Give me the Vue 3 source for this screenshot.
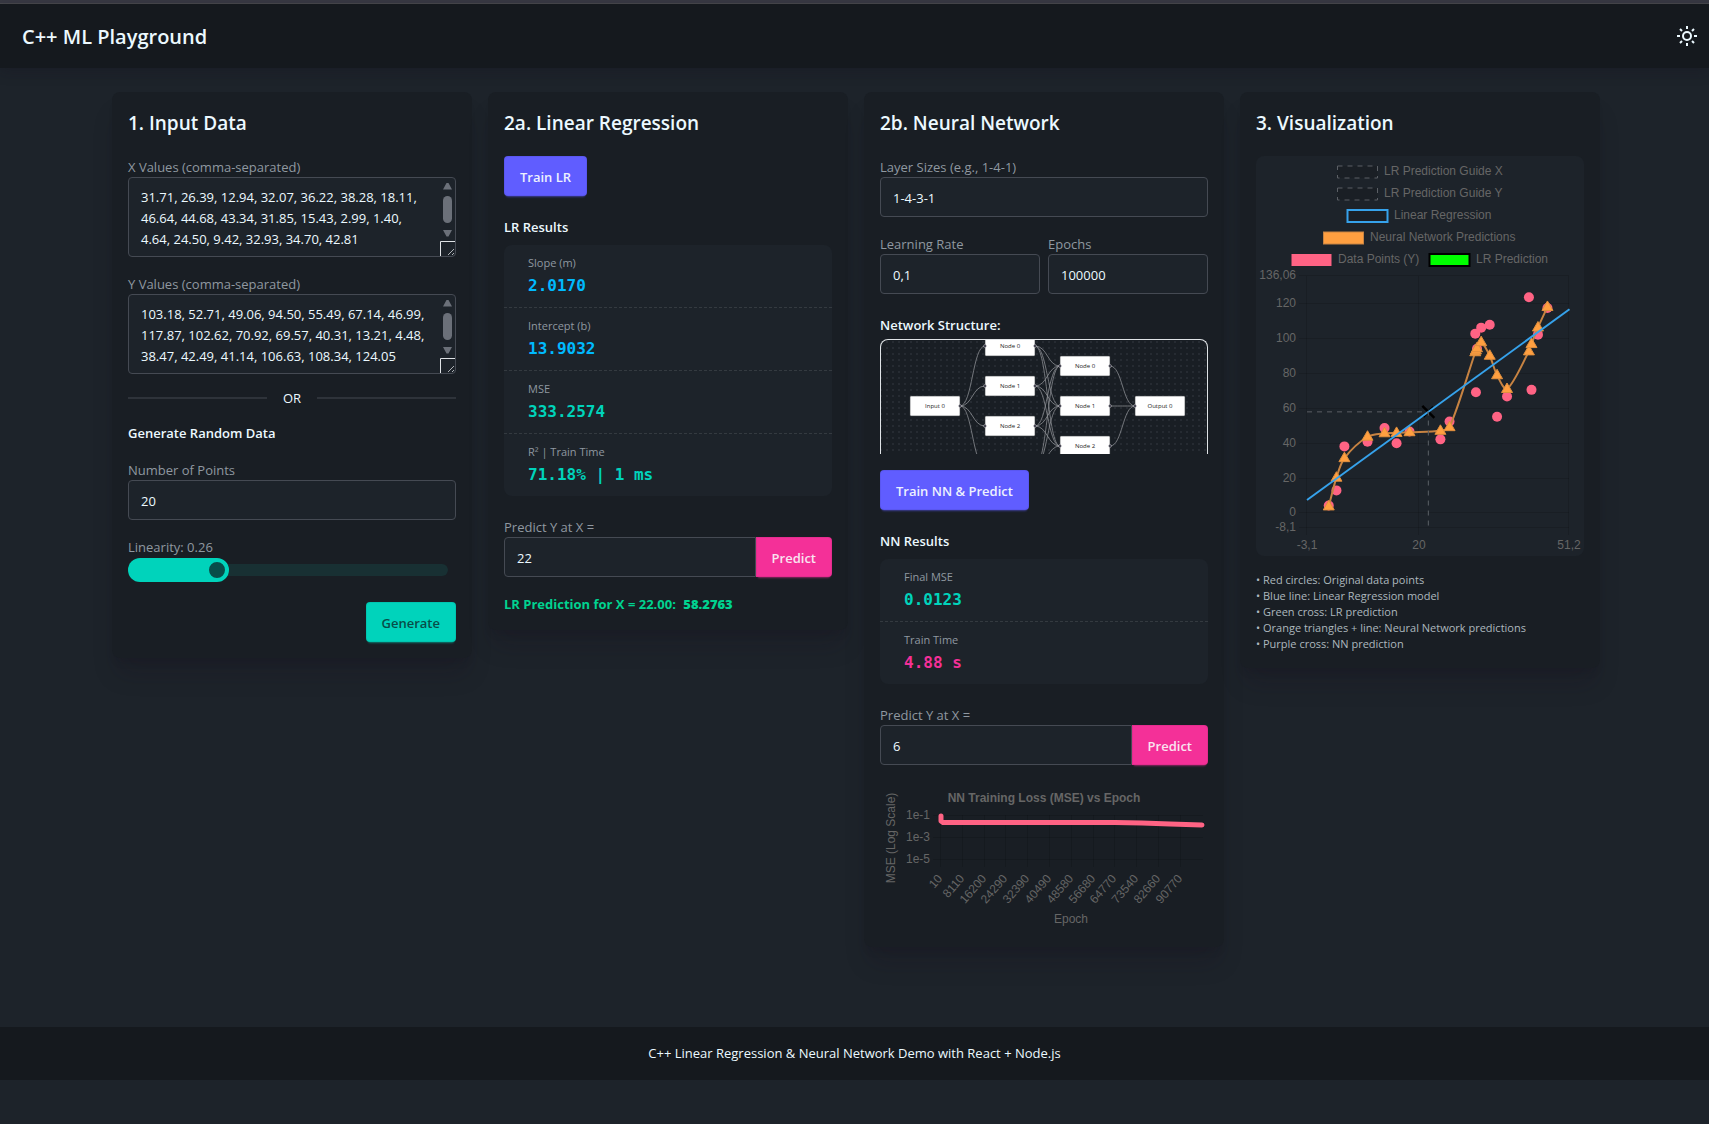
<script setup>
import { ref, computed } from 'vue'

const xValues = ref('31.71, 26.39, 12.94, 32.07, 36.22, 38.28, 18.11, 46.64, 44.68, 43.34, 31.85, 15.43, 2.99, 1.40, 4.64, 24.50, 9.42, 32.93, 34.70, 42.81')
const yValues = ref('103.18, 52.71, 49.06, 94.50, 55.49, 67.14, 46.99, 117.87, 102.62, 70.92, 69.57, 40.31, 13.21, 4.48, 38.47, 42.49, 41.14, 106.63, 108.34, 124.05')
const pointCount = ref(20)
const linearity = ref(0.26)
const lrX = ref(22)
const nnX = ref(6)
const layers = ref('1-4-3-1')
const rate = ref('0,1')
const epochs = ref(100000)

const lrStats = [
  { label: 'Slope (m)', value: '2.0170', tone: 'info' },
  { label: 'Intercept (b)', value: '13.9032', tone: 'info' },
  { label: 'MSE', value: '333.2574', tone: 'accent' },
  { label: 'R² | Train Time', value: '71.18% | 1 ms', tone: 'accent' }
]
const nnStats = [
  { label: 'Final MSE', value: '0.0123', tone: 'accent' },
  { label: 'Train Time', value: '4.88 s', tone: 'secondary' }
]

/* Regression plot */
const sx = (x) => 51 + (x + 3.1) * 4.834
const sy = (y) => 371.5 - (y + 8.1) * 1.742
const points = computed(() => {
  const ys = yValues.value.split(',').map(Number)
  return xValues.value.split(',').map((x, i) => ({ x: sx(Number(x)), y: sy(ys[i]) }))
})
const nn = [
  [1.4, 4], [2.99, 20.5], [4.64, 31.7], [9.42, 44], [12.94, 46], [15.43, 46.2], [18.11, 46.6],
  [24.5, 47.4], [26.39, 49.5], [31.71, 92.5], [31.85, 93.5], [32.07, 94.8], [32.93, 98.3], [34.7, 90.5],
  [36.22, 79.3], [38.28, 71.4], [42.81, 93], [43.34, 97.2], [44.68, 106.7], [46.64, 118.5]
].map(([x, y]) => ({ x: sx(x), y: sy(y) }))
const controls = (p, c, n, t) => {
  const d1 = Math.hypot(c.x - p.x, c.y - p.y)
  const d2 = Math.hypot(n.x - c.x, n.y - c.y)
  const sum = d1 + d2 || 1
  const a = (t * d1) / sum
  const b = (t * d2) / sum
  return {
    px: c.x - a * (n.x - p.x), py: c.y - a * (n.y - p.y),
    nx: c.x + b * (n.x - p.x), ny: c.y + b * (n.y - p.y)
  }
}
const ctl = nn.map((c, i) => controls(nn[Math.max(i - 1, 0)], c, nn[Math.min(i + 1, nn.length - 1)], 0.3))
const nnPath = nn.map((c, i) => i === 0
  ? `M${c.x},${c.y}`
  : `C${ctl[i - 1].nx},${ctl[i - 1].ny} ${ctl[i].px},${ctl[i].py} ${c.x},${c.y}`).join(' ')
const yTicks = [
  { v: 136.06, t: '136,06' }, { v: 120, t: '120' }, { v: 100, t: '100' }, { v: 80, t: '80' },
  { v: 60, t: '60' }, { v: 40, t: '40' }, { v: 20, t: '20' }, { v: 0, t: '0' }, { v: -8.1, t: '-8,1' }
]
const xTicks = [{ v: -3.1, t: '-3,1' }, { v: 20, t: '20' }, { v: 51.2, t: '51,2' }]
const legend = [
  { t: 'LR Prediction Guide X', x: 81, row: 0, kind: 'guide' },
  { t: 'LR Prediction Guide Y', x: 81, row: 1, kind: 'guide' },
  { t: 'Linear Regression', x: 91, row: 2, kind: 'blue' },
  { t: 'Neural Network Predictions', x: 67, row: 3, kind: 'orange' },
  { t: 'Data Points (Y)', x: 35, row: 4, kind: 'pink' },
  { t: 'LR Prediction', x: 173, row: 4, kind: 'green' }
]

/* Network diagram */
const nodes = [
  { t: 'Input 0', x: 30, y: 67 },
  { t: 'Node 0', x: 105, y: 7 }, { t: 'Node 1', x: 105, y: 47 }, { t: 'Node 2', x: 105, y: 87 }, { t: 'Node 3', x: 105, y: 127 },
  { t: 'Node 0', x: 180, y: 27 }, { t: 'Node 1', x: 180, y: 67 }, { t: 'Node 2', x: 180, y: 107 },
  { t: 'Output 0', x: 255, y: 67 }
]
const columns = [nodes.slice(0, 1), nodes.slice(1, 5), nodes.slice(5, 8), nodes.slice(8)]
const visibleNodes = nodes.filter((n) => n.y < 115)
const edges = []
for (let i = 0; i < 3; i++) {
  for (const a of columns[i]) {
    for (const b of columns[i + 1]) {
      const x1 = a.x + 50
      const mid = (x1 + b.x) / 2
      edges.push(`M${x1},${a.y} C${mid},${a.y} ${mid},${b.y} ${b.x},${b.y}`)
    }
  }
}

/* Loss plot */
const lossTicks = ['10', '8110', '16200', '24290', '32390', '40490', '48580', '56680', '64770', '73540', '82660', '90770']
  .map((t, i) => ({ t, x: Math.round(61 + i * 21.8) }))
const lossRows = [{ t: '1e-1', y: 34 }, { t: '1e-3', y: 56 }, { t: '1e-5', y: 78 }]
</script>

<template>
  <div class="page">
    <div class="strip"></div>
    <header class="navbar">
      <h1>C++ ML Playground</h1>
      <button class="theme" type="button" aria-label="Toggle theme">
        <svg viewBox="0 0 20 20" width="20" height="20" fill="none" stroke="currentColor" stroke-width="2">
          <circle cx="10" cy="10" r="4" />
          <path d="M10 0v3M10 17v3M0 10h3M17 10h3M3 3l2 2M15 15l2 2M3 17l2-2M15 5l2-2" />
        </svg>
      </button>
    </header>

    <main class="grid">
      <section class="card">
        <h2>1. Input Data</h2>
        <div class="field">
          <label for="xs">X Values (comma-separated)</label>
          <div class="area">
            <textarea id="xs" v-model="xValues" spellcheck="false"></textarea>
            <svg class="bar" viewBox="0 0 15 78" width="15" height="78" aria-hidden="true">
              <path d="M3 11.500L6.500 5h2L12 11.500z M3 52h9l-3.500 6.500h-2z" fill="#6b7079" />
              <rect x="3" y="18" width="9" height="27" rx="4.500" fill="#6b7079" />
              <path d="M.5 78V63.500H15" fill="none" stroke="#dfe3e6" />
              <path d="M8 77l6-6M12 77l2-2" stroke="#aeb2b6" />
            </svg>
          </div>
        </div>
        <div class="field">
          <label for="ys">Y Values (comma-separated)</label>
          <div class="area">
            <textarea id="ys" v-model="yValues" spellcheck="false"></textarea>
            <svg class="bar" viewBox="0 0 15 78" width="15" height="78" aria-hidden="true">
              <path d="M3 11.500L6.500 5h2L12 11.500z M3 52h9l-3.500 6.500h-2z" fill="#6b7079" />
              <rect x="3" y="18" width="9" height="27" rx="4.500" fill="#6b7079" />
              <path d="M.5 78V63.500H15" fill="none" stroke="#dfe3e6" />
              <path d="M8 77l6-6M12 77l2-2" stroke="#aeb2b6" />
            </svg>
          </div>
        </div>
        <div class="divider">OR</div>
        <h3 class="flush">Generate Random Data</h3>
        <div class="field">
          <label for="count">Number of Points</label>
          <input id="count" v-model="pointCount" class="input" type="number">
        </div>
        <div class="field">
          <label for="lin">Linearity: {{ linearity }}</label>
          <input id="lin" v-model="linearity" class="range" type="range" min="0" max="1" step="0.01">
        </div>
        <button class="btn accent-btn end" type="button">Generate</button>
      </section>

      <section class="card">
        <h2>2a. Linear Regression</h2>
        <button class="btn primary-btn" type="button">Train LR</button>
        <h3>LR Results</h3>
        <dl class="stats">
          <div v-for="s in lrStats" :key="s.label" class="stat">
            <dt>{{ s.label }}</dt>
            <dd :class="s.tone">{{ s.value }}</dd>
          </div>
        </dl>
        <div class="field wide">
          <label for="lrx">Predict Y at X =</label>
          <div class="join">
            <input id="lrx" v-model="lrX" class="input" type="number">
            <button class="btn secondary-btn" type="button">Predict</button>
          </div>
        </div>
        <p class="result">LR Prediction for X = 22.00: <strong>58.2763</strong></p>
      </section>

      <section class="card">
        <h2>2b. Neural Network</h2>
        <div class="field">
          <label for="layers">Layer Sizes (e.g., 1-4-1)</label>
          <input id="layers" v-model="layers" class="input" type="text">
        </div>
        <div class="pair">
          <div class="field">
            <label for="rate">Learning Rate</label>
            <input id="rate" v-model="rate" class="input" type="text">
          </div>
          <div class="field">
            <label for="epochs">Epochs</label>
            <input id="epochs" v-model="epochs" class="input" type="number">
          </div>
        </div>
        <h3 class="tight">Network Structure:</h3>
        <div class="network">
          <svg viewBox="1 1 326 114" role="img" aria-label="Network structure">
            <defs>
              <pattern id="dots" x="4" y="0" width="6" height="6" patternUnits="userSpaceOnUse">
                <circle cx="3" cy="3" r="0.7" fill="#3d4249" />
              </pattern>
            </defs>
            <rect width="328" height="112" fill="url(#dots)" />
            <path v-for="(d, i) in edges" :key="i" :d="d" fill="none" stroke="#8c8e93" stroke-width="0.8" />
            <g v-for="(n, i) in visibleNodes" :key="'n' + i">
              <rect :x="n.x" :y="n.y - 10" width="50" height="20" rx="1" fill="#fff" stroke="#3a3d42" stroke-width="0.6" />
              <circle v-if="n.x > 30" :cx="n.x" :cy="n.y" r="1.400" fill="#1a192b" stroke="#ddd" stroke-width="0.5" />
              <circle v-if="n.x < 255" :cx="n.x + 50" :cy="n.y" r="1.400" fill="#1a192b" stroke="#ddd" stroke-width="0.5" />
              <text :x="n.x + 25" :y="n.y + 2" class="node">{{ n.t }}</text>
            </g>
          </svg>
        </div>
        <button class="btn primary-btn" type="button">Train NN &amp; Predict</button>
        <h3>NN Results</h3>
        <dl class="stats">
          <div v-for="s in nnStats" :key="s.label" class="stat">
            <dt>{{ s.label }}</dt>
            <dd :class="s.tone">{{ s.value }}</dd>
          </div>
        </dl>
        <div class="field wide">
          <label for="nnx">Predict Y at X =</label>
          <div class="join">
            <input id="nnx" v-model="nnX" class="input" type="number">
            <button class="btn secondary-btn" type="button">Predict</button>
          </div>
        </div>
        <svg class="chart" viewBox="0 0 328 150" role="img" aria-label="Training loss">
          <text x="164" y="21" class="mid bold">NN Training Loss (MSE) vs Epoch</text>
          <text class="mid" transform="translate(15 57) rotate(-90)">MSE (Log Scale)</text>
          <g v-for="r in lossRows" :key="r.t">
            <path :d="`M53 ${r.y + 0.5}H323`" class="gridline" />
            <text x="50" :y="r.y + 4" class="right">{{ r.t }}</text>
          </g>
          <g v-for="t in lossTicks" :key="t.t">
            <path :d="`M${t.x - 0.5} 34V86`" class="gridline" />
            <text class="right" :transform="`translate(${t.x + 2} 98) rotate(-49)`">{{ t.t }}</text>
          </g>
          <path d="M61 35V40L63 41.500H235L262 42L290 43L322 44" fill="none" stroke="#ff6384" stroke-width="5" stroke-linecap="round" stroke-linejoin="round" />
          <text x="191" y="142" class="mid">Epoch</text>
        </svg>
      </section>

      <section class="card">
        <h2>3. Visualization</h2>
        <div class="plot">
          <svg class="chart" viewBox="0 0 328 400" role="img" aria-label="Regression plot">
            <g v-for="l in legend" :key="l.t">
              <rect :x="l.x + 0.5" :y="10 + l.row * 22" width="40" height="12" :class="l.kind" />
              <text :x="l.x + 47" :y="19 + l.row * 22">{{ l.t }}</text>
            </g>
            <g v-for="t in yTicks" :key="t.t">
              <path :d="`M43 ${Math.round(sy(t.v)) - 0.5}H313`" class="gridline" />
              <text x="40" :y="Math.round(sy(t.v)) + 3" class="right">{{ t.t }}</text>
            </g>
            <g v-for="t in xTicks" :key="t.t">
              <path :d="`M${Math.round(sx(t.v)) - 0.5} 120V379`" class="gridline" />
              <text :x="Math.round(sx(t.v))" y="393" class="mid">{{ t.t }}</text>
            </g>
            <path :d="`M${sx(22) - 6} ${sy(58.28) - 6}l12 12M${sx(22) - 5} ${sy(58.28) + 5}l10 -10`" stroke="#000" stroke-width="2.500" />
            <circle v-for="(p, i) in points" :key="i" :cx="p.x" :cy="p.y" r="5" fill="#ff6384" />
            <path :d="nnPath" fill="none" stroke="#c78342" stroke-width="2" />
            <path v-for="(p, i) in nn" :key="'t' + i" :d="`M${p.x} ${p.y - 6}l5.500 9.500h-11z`" fill="#ff9f40" stroke="#e08f3e" />
            <path :d="`M${sx(-3.1)} ${sy(7.65)}L${sx(51.2)} ${sy(117.17)}`" stroke="#36a2eb" stroke-width="2" />
            <path :d="`M51 ${sy(58.28)}H${sx(22)}V371`" fill="none" stroke="#5b5f65" stroke-dasharray="5 5" />
          </svg>
        </div>
        <p class="notes">
          • Red circles: Original data points<br>
          • Blue line: Linear Regression model<br>
          • Green cross: LR prediction<br>
          • Orange triangles + line: Neural Network predictions<br>
          • Purple cross: NN prediction
        </p>
      </section>
    </main>

    <footer class="footer">C++ Linear Regression &amp; Neural Network Demo with React + Node.js</footer>
  </div>
</template>

<style>
body {
  margin: 0;
  background: #1d232a;
}
</style>

<style scoped>
.page {
  box-sizing: border-box;
  min-height: 100vh;
  background: #1d232a;
  color: #ecf9ff;
  font: 13px/21px "Open Sans", "Noto Sans", sans-serif;
}
.page *,
.page *::before,
.page *::after {
  box-sizing: border-box;
}
.strip {
  height: 4px;
  background: #383943;
  border-bottom: 1px solid #47484c;
}
.navbar {
  display: flex;
  align-items: center;
  justify-content: space-between;
  height: 64px;
  padding: 0 12px 0 22px;
  background: #15191e;
  box-shadow: 0 4px 12px rgba(20, 16, 30, 0.25);
}
h1,
h2 {
  margin: 0;
  padding-top: 2px;
  font-size: 19px;
  line-height: 26px;
  font-weight: 600;
}
h1 {
  font-size: 20px;
}
.theme {
  display: flex;
  padding: 0;
  border: 0;
  background: none;
  color: #ecf9ff;
}
.grid {
  display: grid;
  grid-template-columns: repeat(4, 1fr);
  align-items: start;
  gap: 16px;
  max-width: 1537px;
  margin: 0 auto;
  padding: 24px 23px 80px 26px;
}
.card {
  display: flex;
  flex-direction: column;
  align-items: flex-start;
  min-width: 0;
  padding: 16px;
  border-radius: 8px;
  background: #191e24;
  box-shadow: 0 20px 25px -5px rgba(20, 12, 30, 0.18), 0 8px 10px -6px rgba(20, 12, 30, 0.18);
}
h2 {
  margin-bottom: 20px;
}
h3 {
  margin: 20px 0 8px;
  padding-top: 2px;
  font-size: 13px;
  line-height: 19px;
  font-weight: 600;
}
h3.flush {
  margin: 0 0 16px;
}
h3.tight {
  margin: 4px 0 4px;
}
.field {
  width: 100%;
  min-width: 0;
  margin-bottom: 16px;
}
.field.wide {
  margin-top: 20px;
}
.field label {
  display: block;
  padding-top: 2px;
  color: #8f98a0;
  line-height: 19px;
}
.input,
textarea {
  display: block;
  width: 100%;
  height: 40px;
  margin: 0;
  padding: 2px 12px 0;
  border: 1px solid #454a53;
  border-radius: 4px;
  outline: 0;
  background: #1d232a;
  color: #ecf9ff;
  font: inherit;
  appearance: none;
}
textarea {
  height: 80px;
  padding: 9px 28px 6px 12px;
  overflow: hidden;
  resize: none;
}
.area {
  position: relative;
}
.bar {
  position: absolute;
  right: 1px;
  bottom: 1px;
}
.divider {
  display: flex;
  align-items: center;
  gap: 16px;
  width: 100%;
  height: 16px;
  margin-bottom: 16px;
}
.divider::before,
.divider::after {
  content: "";
  flex: 1;
  height: 2px;
  background: #2e333a;
}
.range {
  display: block;
  width: 320px;
  max-width: 100%;
  height: 24px;
  margin: 1px 0 4px;
  overflow: hidden;
  border-radius: 12px;
  background: none;
  appearance: none;
}
.range::-webkit-slider-runnable-track {
  height: 12px;
  border-radius: 6px;
  background: #183033;
}
.range::-webkit-slider-thumb {
  width: 24px;
  height: 24px;
  margin-top: -6px;
  border: 4px solid #00d3bb;
  border-radius: 50%;
  background: #084d49;
  box-shadow: -112px 0 0 100px #00d3bb;
  appearance: none;
}
.btn {
  height: 40px;
  padding: 2px 15px 0;
  border: 1px solid rgba(0, 0, 0, 0.06);
  border-radius: 4px;
  font: inherit;
  font-weight: 600;
  white-space: nowrap;
}
.primary-btn {
  background: #605dff;
  color: #edf1fe;
  box-shadow: 0 3px 2px -2px rgba(96, 93, 255, 0.5);
}
.accent-btn {
  background: #00d3bb;
  color: #084d49;
  box-shadow: 0 3px 2px -2px rgba(0, 211, 187, 0.5);
}
.secondary-btn {
  background: #f43098;
  color: #f9e4f0;
  box-shadow: 0 3px 2px -2px rgba(244, 48, 152, 0.5);
}
.end {
  align-self: flex-end;
}
.stats {
  width: 100%;
  margin: 0;
  border-radius: 8px;
  background: #1d232a;
}
.stat {
  padding: 10px 24px 8px;
}
.stat + .stat {
  border-top: 1px dashed #343a40;
}
dt {
  color: #8f98a0;
  font-size: 11px;
  line-height: 16px;
}
dd {
  margin: 0;
  padding-top: 2px;
  font: 700 16px/26px "DejaVu Sans Mono", monospace;
}
.info {
  color: #00bafe;
}
.accent {
  color: #00d3bb;
}
.secondary {
  color: #f43098;
}
.join {
  display: flex;
}
.join .input {
  flex: 1;
  min-width: 0;
  border-radius: 4px 0 0 4px;
}
.join .btn {
  border-radius: 0 4px 4px 0;
}
.result {
  margin: 0;
  padding-top: 2px;
  color: #00d390;
  font-weight: 700;
  line-height: 19px;
}
.result strong {
  margin-left: 4px;
}
.pair {
  display: flex;
  gap: 8px;
  width: 100%;
}
.network {
  width: 100%;
  margin-bottom: 16px;
  overflow: hidden;
  border: 1px solid #dfe3e6;
  border-bottom: 0;
  border-radius: 8px 8px 0 0;
}
.network svg,
.chart {
  display: block;
  width: 100%;
}
.node {
  fill: #222;
  font-size: 6px;
  text-anchor: middle;
}
.plot {
  width: 100%;
  border-radius: 8px;
  background: #1d232a;
}
.chart text {
  fill: #666;
  font: 12px "Liberation Sans", Arial, sans-serif;
}
.chart .bold {
  font-weight: 700;
}
.chart .mid {
  text-anchor: middle;
}
.chart .right {
  text-anchor: end;
}
.gridline {
  fill: none;
  stroke: rgba(0, 0, 0, 0.12);
}
.guide {
  fill: rgba(0, 0, 0, 0.1);
  stroke: #5b5f65;
  stroke-dasharray: 5 5;
}
.blue {
  fill: #1a1f26;
  stroke: #36a2eb;
  stroke-width: 2;
}
.orange {
  fill: #ff9f40;
  stroke: #c78342;
}
.pink {
  fill: #ff6384;
}
.green {
  fill: #0f0;
  stroke: #000;
  stroke-width: 2;
}
.notes {
  margin: 16px 0 0;
  color: #adb8be;
  font-size: 11px;
  line-height: 16px;
}
.footer {
  padding: 16px;
  background: #15191e;
  text-align: center;
}
</style>
